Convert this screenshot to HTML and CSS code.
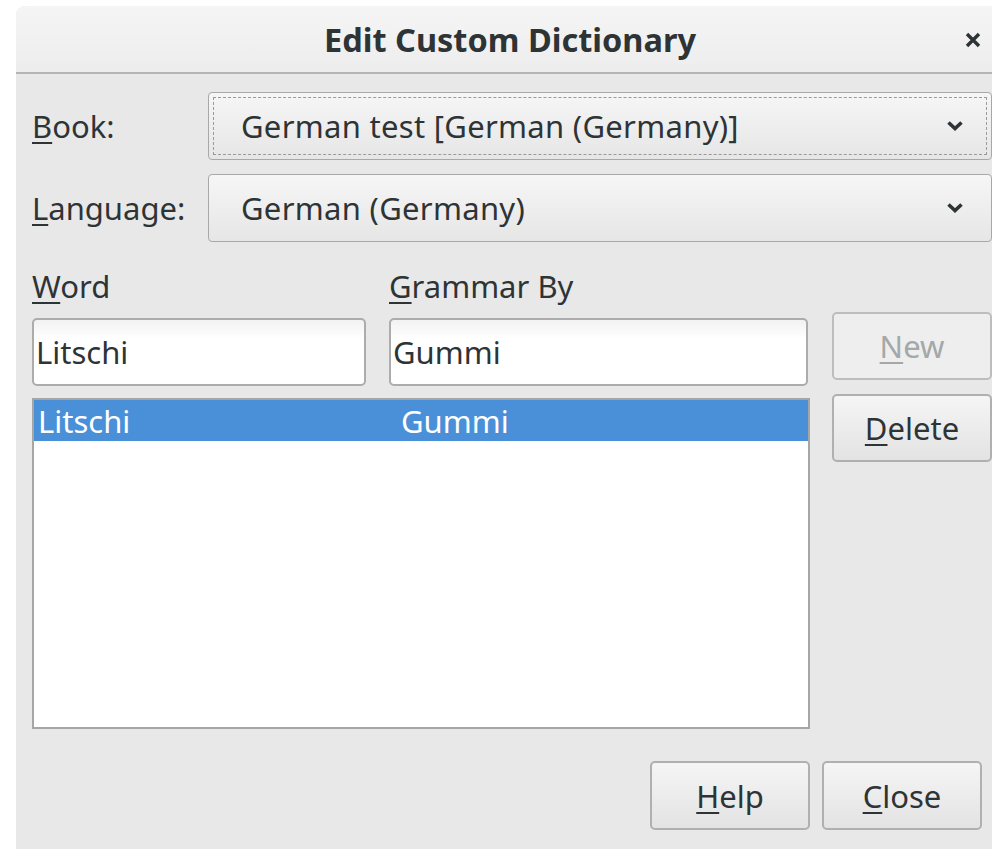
FILE: index.html
```html
<!DOCTYPE html>
<html lang="en">
<head>
<meta charset="utf-8">
<title>Edit Custom Dictionary</title>
<link rel="stylesheet" href="styles.css">
</head>
<body>
<div class="dialog">
  <header class="titlebar">
    <h1 class="title">Edit Custom Dictionary</h1>
    <button class="close-x" aria-label="Close">
      <svg width="18" height="18" viewBox="0 0 18 18"><path d="M3 3 L15 15 M15 3 L3 15" stroke="#2e3436" stroke-width="3.4" stroke-linecap="butt"/></svg>
    </button>
  </header>

  <main class="content">
    <div class="form-row">
      <label class="row-label"><u>B</u>ook:</label>
      <div class="combo combo-focus">
        <span class="combo-text">German test [German (Germany)]</span>
        <svg class="chevron" width="18" height="12" viewBox="0 0 18 12"><path d="M2.5 2.5 L9 8.5 L15.5 2.5" fill="none" stroke="#2e3436" stroke-width="3.6"/></svg>
      </div>
    </div>
    <div class="form-row">
      <label class="row-label"><u>L</u>anguage:</label>
      <div class="combo">
        <span class="combo-text">German (Germany)</span>
        <svg class="chevron" width="18" height="12" viewBox="0 0 18 12"><path d="M2.5 2.5 L9 8.5 L15.5 2.5" fill="none" stroke="#2e3436" stroke-width="3.6"/></svg>
      </div>
    </div>

    <section class="entries">
      <div class="entries-main">
        <div class="entry-labels">
          <span class="col-word"><u>W</u>ord</span>
          <span class="col-grammar"><u>G</u>rammar By</span>
        </div>
        <div class="entry-inputs">
          <div class="entry entry-word">Litschi</div>
          <div class="entry entry-grammar">Gummi</div>
        </div>
        <div class="list">
          <div class="list-row selected">
            <span class="cell-word">Litschi</span>
            <span class="cell-grammar">Gummi</span>
          </div>
        </div>
      </div>
      <div class="entries-side">
        <button class="btn btn-disabled"><u>N</u>ew</button>
        <button class="btn"><u>D</u>elete</button>
      </div>
    </section>

    <footer class="footer">
      <button class="btn btn-footer"><u>H</u>elp</button>
      <button class="btn btn-footer"><u>C</u>lose</button>
    </footer>
  </main>
</div>
</body>
</html>
```

FILE: styles.css
```css
html, body {
  margin: 0;
  padding: 0;
  background: #ffffff;
}

body {
  font-family: "Noto Sans", "Open Sans", "DejaVu Sans", sans-serif;
  font-size: 31px;
  color: #2e3436;
}

u {
  text-decoration: underline;
  text-underline-offset: 4px;
  text-decoration-thickness: 2px;
}

.dialog {
  margin: 6px 0 0 16px;
  width: 976px;
  height: 843px;
  background: #e8e8e8;
  border-top-left-radius: 9px;
  overflow: hidden;
}

/* Header bar */
.titlebar {
  position: relative;
  height: 66px;
  background: linear-gradient(#f5f5f5, #ededed);
  border-bottom: 2px solid #b4b4b4;
  display: flex;
  align-items: center;
  justify-content: center;
}

.title {
  margin: 0;
  font-size: 32.5px;
  font-weight: bold;
  color: #2e3436;
  padding-left: 12px;
}

.close-x {
  position: absolute;
  right: 5px;
  top: 20px;
  width: 28px;
  height: 28px;
  padding: 0;
  border: none;
  background: none;
  display: flex;
  align-items: center;
  justify-content: center;
}

/* Body */
.content {
  padding: 18px 0 0 16px;
}

.form-row {
  display: flex;
  align-items: center;
  height: 68px;
  margin-bottom: 14px;
}

.row-label {
  width: 176px;
  flex: none;
}

.combo {
  box-sizing: border-box;
  width: 784px;
  height: 68px;
  border: 1px solid #a8a8a8;
  border-radius: 4px;
  background: linear-gradient(#f6f6f6, #e6e6e6);
  display: flex;
  align-items: center;
  padding: 0 27px 0 32px;
  position: relative;
}

.combo-focus {
  outline: 1px dashed #9a9a9a;
  outline-offset: -6px;
}

.combo-text {
  flex: 1;
  letter-spacing: 0.3px;
}

.chevron {
  flex: none;
}

/* Word / grammar area */
.entries {
  display: flex;
  gap: 22px;
}

.entries-main {
  width: 778px;
}

.entry-labels {
  display: flex;
  height: 36px;
  line-height: 36px;
  margin-top: 12px;
}

.col-word {
  width: 357px;
}

.entry-inputs {
  display: flex;
  gap: 23px;
  margin-top: 14px;
}

.entry {
  box-sizing: border-box;
  height: 68px;
  border: 2px solid #acacac;
  border-radius: 5px;
  background: linear-gradient(#f2f2f2, #ffffff 30%);
  display: flex;
  align-items: center;
  padding-left: 2px;
}

.entry-word {
  width: 334px;
}

.entry-grammar {
  width: 419px;
}

.list {
  box-sizing: border-box;
  margin-top: 12px;
  width: 778px;
  height: 331px;
  background: #ffffff;
  border: 2px solid #a6a6a6;
}

.list-row {
  height: 41px;
  display: flex;
  align-items: center;
}

.list-row.selected {
  background: #4a90d9;
  color: #ffffff;
}

.cell-word {
  width: 363px;
  padding-left: 4px;
}

.entries-side {
  display: flex;
  flex-direction: column;
  gap: 14px;
  padding-top: 56px;
}

.btn {
  box-sizing: border-box;
  width: 160px;
  height: 68px;
  font: inherit;
  color: #2e3436;
  border: 2px solid #b0b0b0;
  border-radius: 5px;
  background: linear-gradient(#f5f5f5, #e3e3e3);
  padding: 0;
}

.btn-disabled {
  color: #a4a8a8;
  background: #eeeeee;
  border-color: #bdbdbd;
}

.footer {
  display: flex;
  justify-content: flex-end;
  gap: 12px;
  margin-top: 32px;
  padding-right: 10px;
}

.btn-footer {
  height: 69px;
}
```
